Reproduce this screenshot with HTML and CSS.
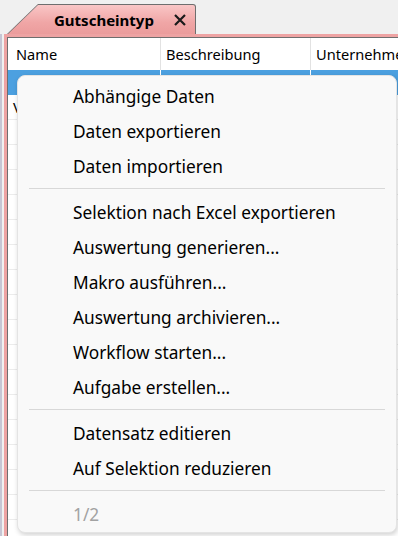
FILE: index.html
```html
<!DOCTYPE html>
<html lang="de">
<head>
  <meta charset="UTF-8">
  <title>Gutscheintyp</title>
  <link rel="stylesheet" href="styles.css">
</head>
<body>
  <div class="window">
    <div class="tabbar">
      <div class="tab">
        <div class="tab-face">
          <span class="tab-title">Gutscheintyp</span>
          <svg class="tab-close" width="12" height="12" viewBox="0 0 12 12"><path d="M1 1 L11 11 M11 1 L1 11" stroke="#1a1a1a" stroke-width="2.2" fill="none"/></svg>
        </div>
      </div>
    </div>

    <div class="frame">
      <div class="grid">
        <div class="grid-head">
          <div class="col col-name">Name</div>
          <div class="col col-desc">Beschreibung</div>
          <div class="col col-comp">Unternehmen</div>
        </div>
        <div class="row selected">
          <div class="col col-name"></div>
          <div class="col col-desc"></div>
          <div class="col col-comp"></div>
        </div>
        <div class="row"><div class="col col-name">V</div></div>
        <div class="row"></div>
        <div class="row"></div>
        <div class="row"></div>
        <div class="row"></div>
        <div class="row"></div>
        <div class="row"></div>
        <div class="row"></div>
        <div class="row"></div>
        <div class="row"></div>
        <div class="row"></div>
        <div class="row"></div>
        <div class="row"></div>
        <div class="row"></div>
        <div class="row"></div>
        <div class="row"></div>
        <div class="row"></div>
      </div>
    </div>

    <!-- context menu over the grid -->
    <div class="menu">
      <div class="menu-item">Abhängige Daten</div>
      <div class="menu-item">Daten exportieren</div>
      <div class="menu-item">Daten importieren</div>
      <div class="menu-sep"></div>
      <div class="menu-item">Selektion nach Excel exportieren</div>
      <div class="menu-item">Auswertung generieren...</div>
      <div class="menu-item">Makro ausführen...</div>
      <div class="menu-item">Auswertung archivieren...</div>
      <div class="menu-item">Workflow starten...</div>
      <div class="menu-item">Aufgabe erstellen...</div>
      <div class="menu-sep"></div>
      <div class="menu-item">Datensatz editieren</div>
      <div class="menu-item">Auf Selektion reduzieren</div>
      <div class="menu-sep"></div>
      <div class="menu-item disabled">1/2</div>
    </div>
  </div>
</body>
</html>
```

FILE: styles.css
```css
body { margin: 0; background: #f0f0f0; font-family: "Noto Sans", "Segoe UI", sans-serif; color: #000; overflow: hidden; }
.window { position: relative; width: 398px; height: 536px; display: flex; flex-direction: column; }

.tabbar { height: 34px; box-sizing: border-box; padding: 4px 0 0 7px; display: flex; }
.tab { width: 189px; height: 30px; background: #6e6e6e; padding: 1px 1px 0 1px; box-sizing: border-box;
  clip-path: polygon(31px 0, 100% 0, 100% 100%, 0 100%); border-top-right-radius: 3px; }
.tab-face { height: 100%; display: flex; align-items: center; padding-left: 46px; gap: 20px;
  background: linear-gradient(#f9c6c6, #f0a6a6 60%, #eb9c9c);
  clip-path: polygon(30px 0, 100% 0, 100% 100%, 0 100%); border-top-right-radius: 2px; }
.tab-title { font-size: 15px; font-weight: bold; }
.tab-close { flex: none; margin-top: 1px; }

.frame { flex: 1; border-left: 2px solid #c6c6d4; padding-left: 2px; display: flex; }
.grid { flex: 1; border-left: 3px solid #eea3a3; border-top: 3px solid #eea3a3; box-shadow: inset 1px 1px 0 #6e6e6e; background: #fff; overflow: hidden; padding: 1px 0 0 1px; }

.grid-head { height: 32px; display: flex; align-items: center; font-size: 14.6px; }
.col { flex: none; box-sizing: border-box; padding-left: 8px; white-space: nowrap; }
.col-name { width: 152px; }
.col-desc { width: 150px; border-left: 1px solid #e2e2e2; padding-left: 5px; }
.col-comp { width: 150px; border-left: 1px solid #e2e2e2; padding-left: 5px; }
.grid-head .col { height: 32px; line-height: 32px; }

.row { height: 25px; box-sizing: border-box; border-bottom: 1px solid #ececec; display: flex; font-size: 15px; line-height: 24px; }
.row .col-name { padding-left: 5px; }
.row.selected { background: #4ca0e0; border-bottom: none; }
.row.selected .col-desc, .row.selected .col-comp { border-left: 1px solid #fff; }

.menu { position: absolute; left: 17px; top: 75px; width: 380px; height: 458px; box-sizing: border-box;
  background: #f9f9f9; border: 1px solid #e4e4e4; border-radius: 8px; padding-top: 3px;
  box-shadow: 1px 2px 5px rgba(0, 0, 0, 0.18); font-size: 17.3px; }
.menu-item { height: 35px; line-height: 35px; padding-left: 55px; white-space: nowrap; }
.menu-item.disabled { color: #a2a2a2; }
.menu-sep { height: 1px; background: #d8d8d8; margin: 4px 11px 6px 11px; }
```
